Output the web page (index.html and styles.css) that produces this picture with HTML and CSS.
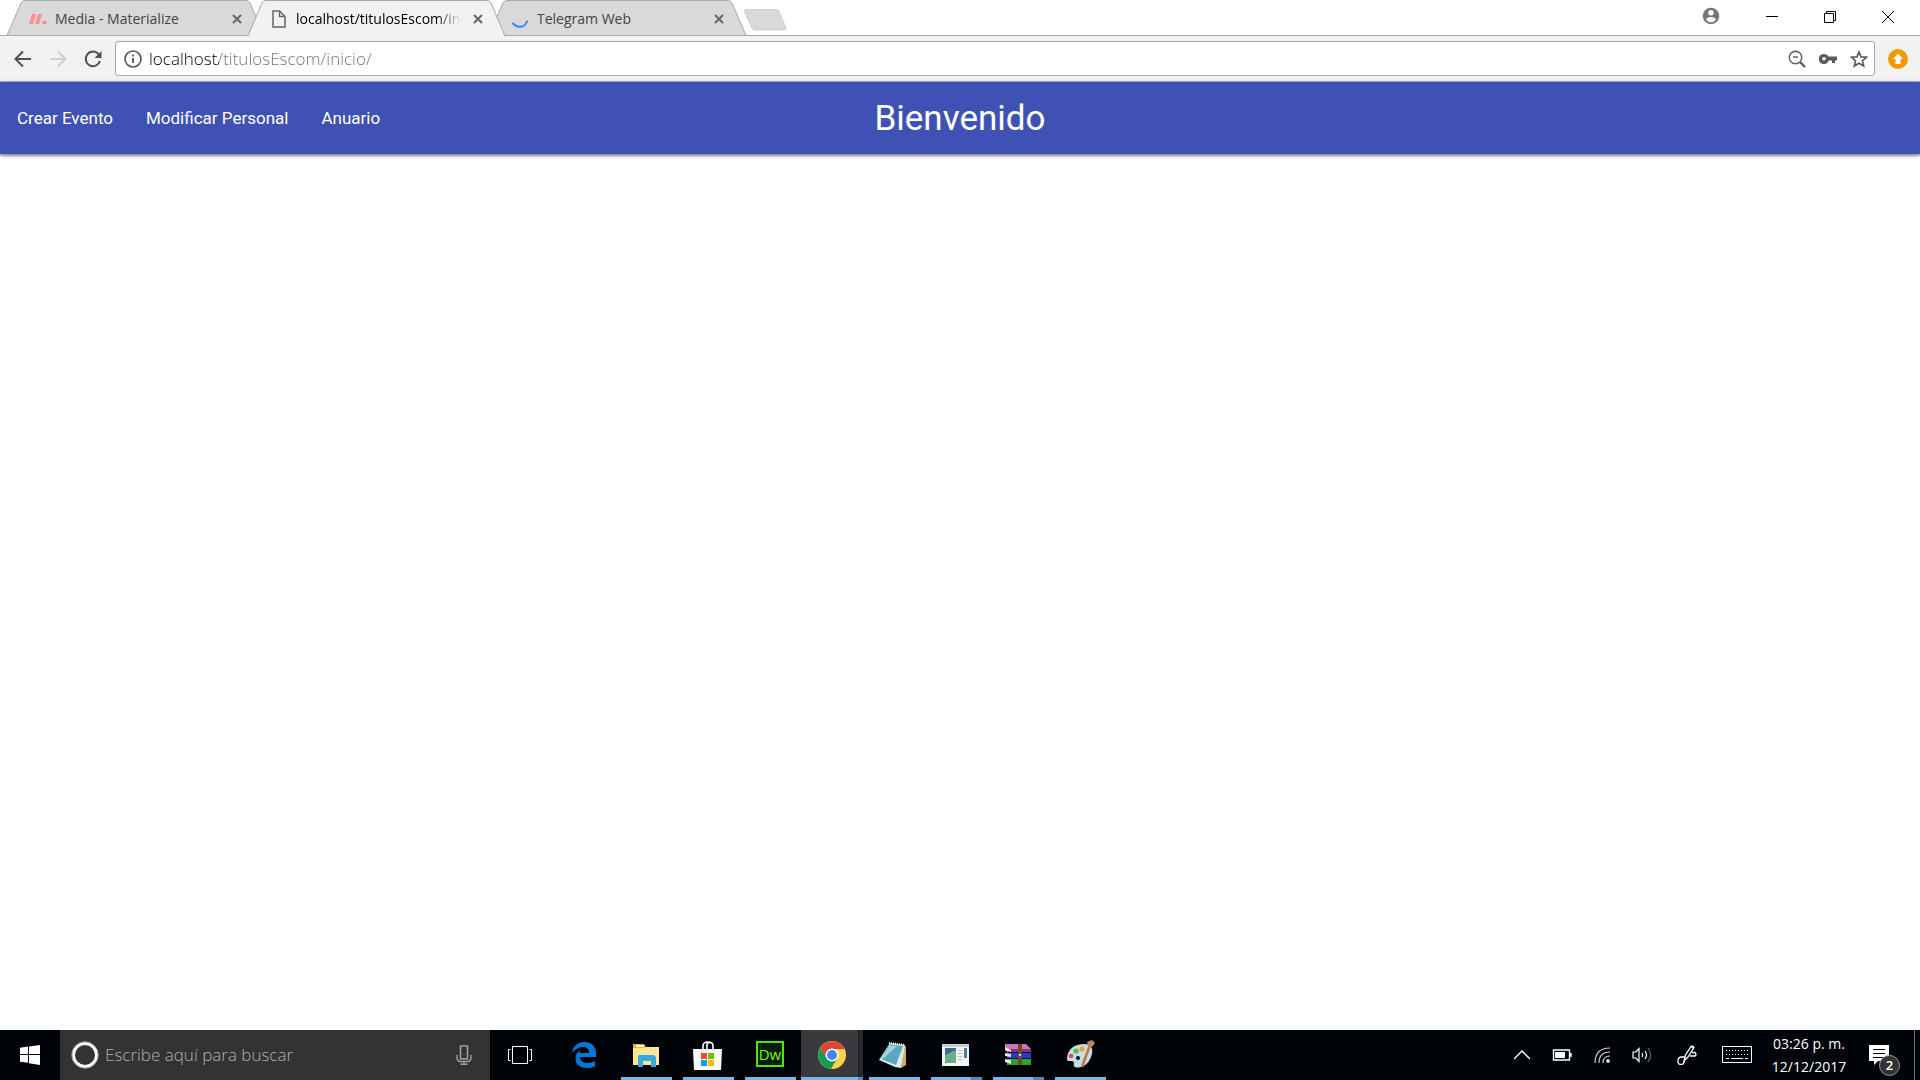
FILE: index.html
```html
<!DOCTYPE html>
<html lang="es">
<head>
<meta charset="utf-8">
<meta name="viewport" content="width=device-width, initial-scale=1">
<title>localhost/titulosEscom/inicio/</title>
<link rel="stylesheet" href="styles.css">
</head>
<body>
<div class="screen">
  <header class="tabstrip">
    <div class="tab">
      <svg class="tab-shape" viewBox="0 0 257 36"><path d="M0 35.5L14 3Q15.500 .5 18 .5H239Q241.500 .5 243 3L257 35.500z"/></svg>
      <svg class="favicon" width="18" height="18" viewBox="0 0 18 18" fill="#fa8e93"><path d="M3 4h4L4 14H0zM9 4h4l-3 10H6zM14 11h4l-1 3h-4z"/></svg>
      <span class="tab-title">Media - Materialize</span>
      <button class="tab-close" aria-label="Cerrar Media"><svg width="10" height="10" viewBox="0 0 10 10"><path d="M1 1l8 8M9 1L1 9"/></svg></button>
    </div>
    <div class="tab tab-active">
      <svg class="tab-shape" viewBox="0 0 257 36"><path d="M0 36L14 3Q15.500 .5 18 .5H239Q241.500 .5 243 3L257 36"/></svg>
      <svg class="favicon" width="18" height="18" viewBox="0 0 18 18" fill="none" stroke="#666" stroke-width="1.500"><path d="M3 1h6.500L15 6.500V17H3zM9.500 1v5.500H15"/></svg>
      <span class="tab-title">localhost/titulosEscom/inicio/</span>
      <button class="tab-close" aria-label="Cerrar localhost"><svg width="10" height="10" viewBox="0 0 10 10"><path d="M1 1l8 8M9 1L1 9"/></svg></button>
    </div>
    <div class="tab">
      <svg class="tab-shape" viewBox="0 0 257 36"><path d="M0 35.500L14 3Q15.500 .5 18 .5H239Q241.500 .5 243 3L257 35.500z"/></svg>
      <svg class="favicon" width="18" height="18" viewBox="0 0 18 18" fill="none" stroke="#4285f4" stroke-width="2" stroke-linecap="round"><path d="M2 13.500Q5 17 9.500 16.800Q14 16.500 16 11.500"/></svg>
      <span class="tab-title">Telegram Web</span>
      <button class="tab-close" aria-label="Cerrar Telegram Web"><svg width="10" height="10" viewBox="0 0 10 10"><path d="M1 1l8 8M9 1L1 9"/></svg></button>
    </div>
    <button class="new-tab" aria-label="Nueva pestaña"><svg width="44" height="22" viewBox="0 0 44 22"><path d="M3 .5H33Q35 .5 36 2.500L43 19Q43.500 21 41.500 21H12Q10 21 9 19L1.500 3Q1 .5 3 .5z" fill="#d9d9d9" stroke="#cfcfcf"/></svg></button>
    <div class="window-controls">
      <button class="profile" aria-label="Perfil"><svg width="20" height="20" viewBox="0 0 20 20"><circle cx="10" cy="9" r="8.300" fill="#757575"/><circle cx="10" cy="5.800" r="2.700" fill="#fff"/><path d="M5 12.500Q6 10 10 10t5 2.500Q13 15.300 10 15.300T5 12.500z" fill="#fff"/></svg></button>
      <button aria-label="Minimizar"><svg width="12" height="14" viewBox="0 0 12 14" stroke="#000"><path d="M0 6.500h12"/></svg></button>
      <button aria-label="Restaurar"><svg width="12" height="12" viewBox="0 0 12 12" fill="none" stroke="#000"><path d="M.5 2.500h9v9h-9zM2.500 2.500v-2h9v9h-2"/></svg></button>
      <button aria-label="Cerrar"><svg width="12" height="12" viewBox="0 0 12 12" stroke="#000"><path d="M0 0l12 12M12 0L0 12"/></svg></button>
    </div>
  </header>

  <div class="toolbar">
    <button aria-label="Atrás"><svg width="18" height="18" viewBox="0 0 18 18" fill="none" stroke="#505050" stroke-width="2"><path d="M17 9H2M9 1.500L1.500 9 9 16.500"/></svg></button>
    <button aria-label="Adelante"><svg width="18" height="18" viewBox="0 0 18 18" fill="none" stroke="#d0d0d0" stroke-width="2"><path d="M1 9h15M9 1.500L16.500 9 9 16.500"/></svg></button>
    <button aria-label="Recargar"><svg width="18" height="18" viewBox="0 0 18 18"><path d="M14.500 4A7.300 7.300 0 1 0 16 11" fill="none" stroke="#505050" stroke-width="2"/><path d="M17.500 1v7h-7z" fill="#505050"/></svg></button>
    <div class="omnibox">
      <svg width="18" height="18" viewBox="0 0 18 18" fill="none" stroke="#555"><circle cx="9" cy="9" r="8" stroke-width="1.600"/><path d="M9 8v5M9 4.500v2" stroke-width="1.800"/></svg>
      <input class="url" type="text" value="localhost/titulosEscom/inicio/" aria-label="Dirección">
      <button aria-label="Zoom"><svg width="18" height="18" viewBox="0 0 18 18" fill="none" stroke="#5a5a5a"><circle cx="7.500" cy="7.500" r="6.200" stroke-width="1.400"/><path d="M5 7h5" stroke-width="1.400"/><path d="M12 12l5 5" stroke-width="2.400"/></svg></button>
      <button aria-label="Contraseñas"><svg width="18" height="12" viewBox="0 0 18 12"><path fill="#5a5a5a" fill-rule="evenodd" d="M5 1a5 5 0 1 0 4.600 6.500H13V10h3V7.500h2v-4H9.600A5 5 0 0 0 5 1zM5 4a1.800 1.800 0 1 1 0 3.600A1.800 1.800 0 0 1 5 4z"/></svg></button>
      <button aria-label="Favoritos"><svg width="18" height="18" viewBox="0 0 18 18" fill="none" stroke="#5a5a5a" stroke-width="1.600"><path d="M9 2l2.100 4.900 5.400.4-4.100 3.500 1.300 5.200L9 13.200 4.300 16l1.300-5.200L1.500 7.300l5.400-.4z"/></svg></button>
    </div>
    <button class="extension" aria-label="Actualizar"><svg width="20" height="20" viewBox="0 0 20 20"><circle cx="10" cy="10" r="10" fill="#f29900"/><path d="M10 4.500l5 5.500h-2.500v5h-5v-5H5z" fill="#fff"/></svg></button>
  </div>

  <nav class="navbar">
    <ul class="nav-links">
      <li><a href="#crear">Crear Evento</a></li>
      <li><a href="#modificar">Modificar Personal</a></li>
      <li><a href="#anuario">Anuario</a></li>
    </ul>
    <a class="brand" href="#inicio">Bienvenido</a>
  </nav>

  <main class="page"></main>

  <footer class="taskbar">
    <button class="start" aria-label="Inicio"><svg width="20" height="20" viewBox="0 0 20 20" fill="#fff"><path d="M0 2.800L8 1.600V9H0zM9 1.500L20 0v9H9zM0 10h8v7.800L0 16.800zM9 10h11v10L9 18.200z"/></svg></button>
    <div class="search">
      <svg width="28" height="28" viewBox="0 0 28 28"><circle cx="14" cy="14" r="11.500" fill="none" stroke="#fff" stroke-width="3"/><circle cx="14" cy="14" r="13.300" fill="none" stroke="#999" stroke-width="1"/></svg>
      <input type="text" placeholder="Escribe aquí para buscar" aria-label="Buscar">
      <button aria-label="Micrófono"><svg width="16" height="20" viewBox="0 0 16 20" fill="none" stroke="#a0a0a0"><path d="M4.500 1h7v13h-7z" stroke-width="1.600"/><path d="M1 10v4l2 2.500h10l2-2.500v-4M8 17v2M4.500 19.300h7" stroke-width="1.400"/></svg></button>
    </div>
    <div class="apps">
      <button class="app" aria-label="Vista de tareas"><svg width="28" height="20" viewBox="0 0 28 20" fill="none" stroke="#fff"><path d="M4.500 1.500h15v17h-15zM2.500 4.500h-2v11h2M21.500 4.500h2v11h-2"/></svg></button>
      <button class="app" aria-label="Edge"><svg width="24" height="26" viewBox="0 0 24 26"><path fill="#0078d7" d="M0 11C1 4 6 0 12.500 0 20 0 24 5 24 11v4H8c0 4 3.500 6 7.500 6 3 0 5.500-.8 7.500-2v5.200C20.500 25.600 17.500 26 14.500 26 8 26 3.500 22.500 3.500 16.500c0-4 2-7 5.500-9-1 1-1.500 2-1.600 3.500H17C17 7 15 5 11 5 6.500 5 3 7.500 0 11z"/></svg></button>
      <button class="app running" aria-label="Explorador"><svg width="28" height="24" viewBox="0 0 28 24"><path fill="#e8b126" d="M1 1h11l2 3h13v6H1z"/><path fill="#fff" d="M4 2h8v2H4z"/><path fill="#ffe694" d="M1 5h11l2-1h13v18H1z"/><path fill="#39a9e0" d="M7 12h15l2 2v10h-5v-6h-8v6H6V14z"/></svg></button>
      <button class="app running" aria-label="Tienda"><svg width="30" height="30" viewBox="0 0 30 30"><path d="M10 10V6q0-4 5-4t5 4v4M14 9V4q2-3 6 0" fill="none" stroke="#fff" stroke-width="1.600"/><path fill="#fff" d="M0 9h29l-1 21H1z"/><path fill="#f25022" d="M8 13h6v6H8z"/><path fill="#7fba00" d="M15 13h6v6h-6z"/><path fill="#00a4ef" d="M8 20h6v6H8z"/><path fill="#ffb900" d="M15 20h6v6h-6z"/></svg></button>
      <button class="app running" aria-label="Dreamweaver"><span class="dw">Dw</span></button>
      <button class="app running grouped current" aria-label="Chrome"><svg width="28" height="28" viewBox="0 0 28 28"><circle cx="14" cy="14" r="14" fill="#ffd24d"/><path fill="#db4437" d="M2 7A14 14 0 0 1 26.500 8H14L8.500 17z"/><path fill="#0f9d58" d="M2 7a14 14 0 0 0 11 21l6-10.500H9z"/><circle cx="14" cy="14" r="6.500" fill="#fff"/><circle cx="14" cy="14" r="5" fill="#4285f4"/></svg></button>
      <button class="app running" aria-label="Bloc de notas"><svg width="30" height="28" viewBox="0 0 30 28"><path fill="#d9a95b" d="M25 4l2 2v18l-5 3z"/><path fill="#dce9ec" d="M11 2l15 2-4 23-6-1L0 19z"/><path fill="#5ea6ba" d="M10 3l14 2-7 19L2 18z"/><path fill="#9fd1dc" d="M10 4l8 1L5 17l-3 1z"/><path d="M10 2l16 2" stroke="#fff" stroke-width="2" stroke-dasharray="1 1"/></svg></button>
      <button class="app running grouped" aria-label="Visor"><svg width="28" height="24" viewBox="0 0 28 24"><path fill="#f3f3f3" d="M0 1h27v22H0z"/><path fill="#c5cbd0" d="M0 1h27v3H0z"/><path fill="#42679b" d="M3 5h11v15H3z"/><path fill="#6aaf85" d="M3 12l11-5v13H3z"/><path stroke="#bbb" d="M16 7.500h4M16 10.500h4M16 13.500h4M16 16.500h4"/><path fill="#4a80a0" d="M22 5h3v10h-3z"/></svg></button>
      <button class="app running grouped" aria-label="WinRAR"><svg width="28" height="24" viewBox="0 0 28 24"><path fill="#cc75b5" d="M1 1h21l5 5v4H4L1 7z"/><path fill="#8a3475" d="M4 6h23v4H4z"/><path fill="#2738d9" d="M3 10h24v5H3z"/><path fill="#28a628" d="M3 16h24v6H3z"/><path fill="#e8e8e8" d="M1 4l6 3v2L1 7zM1 10l6 1v3l-6-1zM1 16l6 1v4l-6-2z"/><path fill="#111" d="M4 9h23v1H4zM4 15h23v1H4z"/><path fill="#704822" d="M14 1h4v21h-4z"/><circle cx="16" cy="12" r="2" fill="#ccc" stroke="#333"/></svg></button>
      <button class="app running" aria-label="Paint"><svg width="30" height="30" viewBox="0 0 30 30"><path fill="#bfdef2" d="M2 19C2 9 10 4 19 4c8 0 10 6 7 13-3 8-10 12-16 10-3-1 1-5-3-6-2-.5-5 1-5-2z"/><circle cx="6" cy="16" r="2.300" fill="#e24a3b"/><circle cx="11" cy="11" r="2.600" fill="#6ab53c"/><circle cx="17" cy="9" r="2.600" fill="#f2a51a"/><circle cx="13" cy="18" r="2" fill="#111"/><path d="M25 5L17 27" stroke="#c9762c" stroke-width="2.600"/><path fill="#b58b63" d="M22 2l5-2 3 3-3 4-4-1z"/></svg></button>
    </div>
    <div class="tray">
      <button aria-label="Iconos ocultos"><svg width="16" height="10" viewBox="0 0 16 10" fill="none" stroke="#fff" stroke-width="1.400"><path d="M0 9l8-8 8 8"/></svg></button>
      <button aria-label="Batería"><svg width="20" height="12" viewBox="0 0 20 12"><path d="M1.500 1h16v10h-16zM19 4v4" fill="none" stroke="#fff" stroke-width="1.400"/><path fill="#fff" d="M3 3h10v6H3z"/></svg></button>
      <button aria-label="Wi-Fi"><svg width="16" height="16" viewBox="0 0 16 16" fill="none" stroke="#ccc" stroke-width="1.200"><path d="M1 16Q1 1 16 1M5 16Q5 5 16 5M9 16Q9 9 16 9"/><circle cx="14" cy="14" r="1.300" fill="#fff"/></svg></button>
      <button aria-label="Volumen"><svg width="20" height="18" viewBox="0 0 20 18" fill="none" stroke="#fff" stroke-width="1.200"><path d="M1 6h3l3-3.500v13L4 12H1zM10 7q1.500 2 0 4M13 5q3 4 0 8"/><path d="M16 2q5 7 0 14" stroke="#666"/></svg></button>
      <button class="wide" aria-label="Windows Ink"><svg width="20" height="20" viewBox="0 0 20 20" fill="none" stroke="#fff" stroke-width="1.300"><path d="M7 16l1.500-6L14 1.500q2-1 3 1L11 12zM14 1l2 2M8 12H4q-3 .5-3 4t3 3.500q3 0 3.500-3.500M15 7.500h3q2 2 0 3.500h-5"/></svg></button>
      <button class="wide" aria-label="Teclado"><svg width="30" height="18" viewBox="0 0 30 18" fill="none" stroke="#fff"><path d="M.5.5h29v16H.5z"/><path d="M4 4.500h23M4 8.500h23" stroke-dasharray="1 2"/><path d="M4 12.500h3M9 12.500h12M23 12.500h3"/></svg></button>
      <button class="clock"><span>03:26 p. m.</span><span>12/12/2017</span></button>
      <button class="notifications" aria-label="Notificaciones"><svg width="20" height="20" viewBox="0 0 20 20"><path fill="#fff" d="M0 0h20v16H9l-4 4v-4H0z"/><path stroke="#000" d="M4 4.500h12M4 8.500h12M4 12.500h12"/></svg><span class="badge">2</span></button>
      <button class="show-desktop" aria-label="Mostrar escritorio"></button>
    </div>
  </footer>
</div>
</body>
</html>
```
FILE: styles.css
```css
* { box-sizing: border-box; }
body { margin: 0; background: #fff; font-family: "Open Sans", "Noto Sans", sans-serif; }
button { display: flex; align-items: center; justify-content: center; margin: 0; padding: 0; border: 0; background: none; color: inherit; font: inherit; }
input { min-width: 0; padding: 0; border: 0; outline: 0; background: none; font: inherit; }
svg { display: block; flex: none; }
.screen { display: flex; flex-direction: column; min-height: 100vh; }

/* Tabs */
.tabstrip { display: flex; height: 36px; padding-left: 7px; background: linear-gradient(#a9a9a9, #a9a9a9) bottom / 100% 1px no-repeat; }
.tab { position: relative; display: flex; align-items: center; width: 257px; padding: 2px 22px 0 22px; margin-right: -16px; font-size: 14px; color: #444; }
.tab-shape { position: absolute; inset: 0; width: 100%; height: 36px; z-index: -1; fill: #d9d9d9; stroke: #a9a9a9; }
.tab-active { z-index: 1; color: #000; }
.tab-active .tab-shape { fill: #f2f2f2; }
.favicon { margin-right: 8px; }
.tab-title { flex: 1; overflow: hidden; white-space: nowrap; line-height: 20px; margin-right: 12px; }
.tab-active .tab-title { -webkit-mask-image: linear-gradient(90deg, #000 85%, transparent); mask-image: linear-gradient(90deg, #000 85%, transparent); }
.tab-close { width: 10px; stroke: #666; stroke-width: 2; }
.new-tab { align-items: flex-start; margin-left: 13px; padding-top: 9px; }
.window-controls { display: flex; margin-left: auto; padding: 0 3px 3px 0; }
.window-controls button { width: 58px; }
.window-controls .profile { width: 64px; }

/* Address bar */
.toolbar { display: flex; align-items: center; height: 46px; padding: 0 0 0 5px; background: #f2f2f2; border-bottom: 1px solid #b5b5b5; }
.toolbar > button { width: 35px; height: 35px; }
.omnibox { flex: 1; display: flex; align-items: center; height: 35px; margin-left: 5px; padding-left: 8px; background: #fff; border: 1px solid #a9a9a9; border-radius: 3px; }
.url { flex: 1; margin-left: 7px; font-size: 17px; font-weight: 300; line-height: 24px; color: transparent; background: linear-gradient(90deg, #000 70px, #707070 70px); -webkit-background-clip: text; background-clip: text; }
.omnibox button { width: 31px; height: 30px; }
.toolbar > .extension { width: 45px; }

/* Site navigation */
.navbar { position: relative; z-index: 1; display: grid; grid-template-columns: 1fr auto 1fr; align-items: center; height: 72px; background: #3f51b5; box-shadow: 0 2px 2px rgba(0, 0, 0, .3), 0 1px 5px rgba(0, 0, 0, .3); font-family: Roboto, sans-serif; }
.navbar a { color: #fff; text-decoration: none; }
.nav-links { display: flex; margin: 0; padding: 0; list-style: none; font-size: 17px; line-height: 72px; }
.nav-links a { display: block; padding: 0 16px 0 17px; }
.brand { padding-top: 2px; font-size: 35px; line-height: 70px; }
.page { flex: 1; }

/* Taskbar */
.taskbar { display: flex; height: 50px; background: #000308; color: #fff; }
.start { width: 60px; }
.search { display: flex; align-items: center; width: 430px; padding: 0 18px 0 11px; background: #333; }
.search input { flex: 1; margin-left: 6px; font-size: 17px; font-weight: 300; line-height: 24px; color: #fff; }
.search input::placeholder { color: #b0b0b0; opacity: 1; }
.apps { display: flex; padding-left: 1px; }
.app { position: relative; width: 62px; }
.running::after { content: ""; position: absolute; left: 6px; right: 5px; bottom: 0; height: 3px; background: #76b9ed; }
.grouped::after { background: linear-gradient(90deg, #76b9ed 40px, #5688b5 40px); }
.current { background: linear-gradient(90deg, #383a3e 57px, #1b1d20 57px, #1b1d20 58px, #292b2f 58px); }
.current::after { left: 0; right: 0; background: linear-gradient(90deg, #76b9ed 57px, #5688b5 57px); }
.dw { width: 28px; height: 26px; margin-bottom: 3px; border: 2px solid #4be800; background: #071b05; color: #6bff1c; font-size: 15px; line-height: 22px; }
.tray { display: flex; margin-left: auto; }
.tray button { width: 40px; }
.tray .wide { width: 50px; }
.tray .clock { width: 94px; flex-direction: column; font-size: 14px; line-height: 23px; white-space: nowrap; }
.tray .notifications { position: relative; width: 58px; padding-right: 12px; }
.badge { position: absolute; right: 14px; bottom: 4px; width: 21px; height: 21px; border: 1px solid #999; border-radius: 50%; background: #333; font-size: 13px; font-weight: 600; line-height: 19px; }
.tray .show-desktop { width: 6px; border-left: 1px solid #777; }
```
